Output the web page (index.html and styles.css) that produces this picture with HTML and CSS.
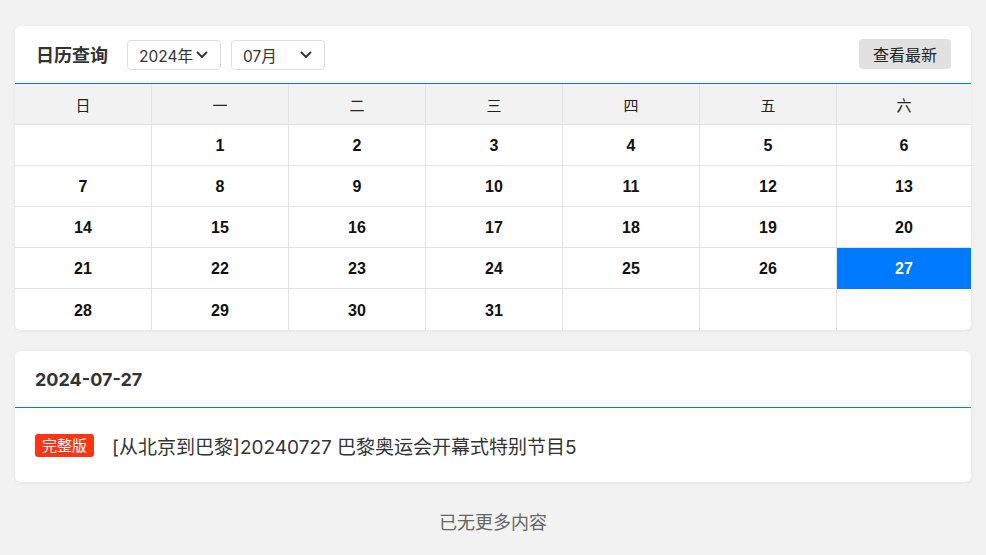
FILE: index.html
```html
<!DOCTYPE html>
<html lang="zh">
<head>
<meta charset="utf-8">
<link rel="stylesheet" href="styles.css">
</head>
<body>
<div class="page">
  <section class="card cal">
    <div class="cal-head">
      <div class="title">日历查询</div>
      <div class="sel sel-year">2024年<svg class="chev" viewBox="0 0 12 8"><path d="M1.5 1.5 6 6l4.5-4.5" /></svg></div>
      <div class="sel sel-month">07月<svg class="chev" viewBox="0 0 12 8"><path d="M1.5 1.5 6 6l4.5-4.5" /></svg></div>
      <div class="spacer"></div>
      <button class="latest">查看最新</button>
    </div>
    <div class="grid">
      <div class="wd">日</div><div class="wd">一</div><div class="wd">二</div><div class="wd">三</div><div class="wd">四</div><div class="wd">五</div><div class="wd">六</div>
      <div class="d"></div><div class="d">1</div><div class="d">2</div><div class="d">3</div><div class="d">4</div><div class="d">5</div><div class="d">6</div>
      <div class="d">7</div><div class="d">8</div><div class="d">9</div><div class="d">10</div><div class="d">11</div><div class="d">12</div><div class="d">13</div>
      <div class="d">14</div><div class="d">15</div><div class="d">16</div><div class="d">17</div><div class="d">18</div><div class="d">19</div><div class="d">20</div>
      <div class="d">21</div><div class="d">22</div><div class="d">23</div><div class="d">24</div><div class="d">25</div><div class="d">26</div><div class="d active">27</div>
      <div class="d">28</div><div class="d">29</div><div class="d">30</div><div class="d">31</div><div class="d"></div><div class="d"></div><div class="d"></div>
    </div>
  </section>

  <section class="card list">
    <div class="list-head">2024-07-27</div>
    <div class="item">
      <span class="badge">完整版</span>
      <span class="item-title">[从北京到巴黎]20240727 巴黎奥运会开幕式特别节目5</span>
    </div>
  </section>

  <div class="nomore">已无更多内容</div>
</div>
</body>
</html>
```

FILE: styles.css
```css
* { box-sizing: border-box; }
html, body { margin: 0; padding: 0; }
body {
  background: #f2f2f2;
  font-family: "Inter", "Noto Sans CJK SC", sans-serif;
  color: #333;
}
.page {
  padding: 26px 15px 0 15px;
  display: flex;
  flex-direction: column;
}
.card {
  background: #fff;
  border-radius: 6px;
  box-shadow: 0 1px 4px rgba(0,0,0,0.06);
  overflow: hidden;
}
.cal-head {
  height: 58px;
  display: flex;
  align-items: center;
  padding: 0 20px 0 21px;
  border-bottom: 1px solid #007aff;
}
.title {
  font-size: 18px;
  font-weight: bold;
  color: #333;
  margin-right: 19px;
  margin-top: -1px;
}
.sel {
  height: 30px;
  border: 1px solid #dedede;
  border-radius: 4px;
  display: flex;
  align-items: center;
  justify-content: space-between;
  padding: 0 12px 0 11px;
  font-size: 15.5px;
  color: #333;
  margin-top: 1px;
}
.sel-year { width: 94px; }
.sel-month { width: 94px; margin-left: 10px; }
.chev {
  width: 12px;
  height: 8px;
  fill: none;
  stroke: #333;
  stroke-width: 1.8;
  stroke-linecap: round;
  stroke-linejoin: round;
}
.spacer { flex: 1; }
.latest {
  height: 30px;
  width: 92px;
  border: 0;
  border-radius: 4px;
  background: #e1e1e1;
  font-family: inherit;
  font-size: 16px;
  color: #222;
  padding: 0;
  margin-top: -2px;
}
.grid {
  display: grid;
  grid-template-columns: repeat(6, 137px) 1fr;
}
.grid > div {
  height: 41px;
  display: flex;
  align-items: center;
  justify-content: center;
  border-right: 1px solid #e3e3e3;
  border-bottom: 1px solid #e3e3e3;
}
.grid > div:nth-child(7n) { border-right: 0; }
.grid > div:nth-last-child(-n+7) { border-bottom: 0; }
.wd {
  background: #f2f2f2;
  font-size: 15px;
  color: #222;
}
.d {
  font-family: "Liberation Sans", "Noto Sans CJK SC", sans-serif;
  font-size: 16px;
  font-weight: bold;
  color: #111;
  padding-top: 2px;
}
.grid > .d.active {
  background: #007aff;
  color: #fff;
  border-color: #007aff;
}
.list { margin-top: 21px; }
.list-head {
  height: 57px;
  display: flex;
  align-items: center;
  padding-left: 20px;
  font-size: 18px;
  font-weight: bold;
  color: #333;
  border-bottom: 1px solid #007aff;
}
.item {
  height: 74px;
  display: flex;
  align-items: center;
  padding-left: 20px;
}
.badge {
  background: #ff3413;
  color: #fff;
  font-size: 15px;
  height: 23px;
  line-height: 23px;
  padding: 0 7px;
  border-radius: 3px;
  margin-right: 18px;
}
.item-title {
  font-size: 19px;
  color: #333;
}
.nomore {
  text-align: center;
  margin-top: 29px;
  font-size: 18px;
  line-height: 24px;
  color: #666;
}
```
